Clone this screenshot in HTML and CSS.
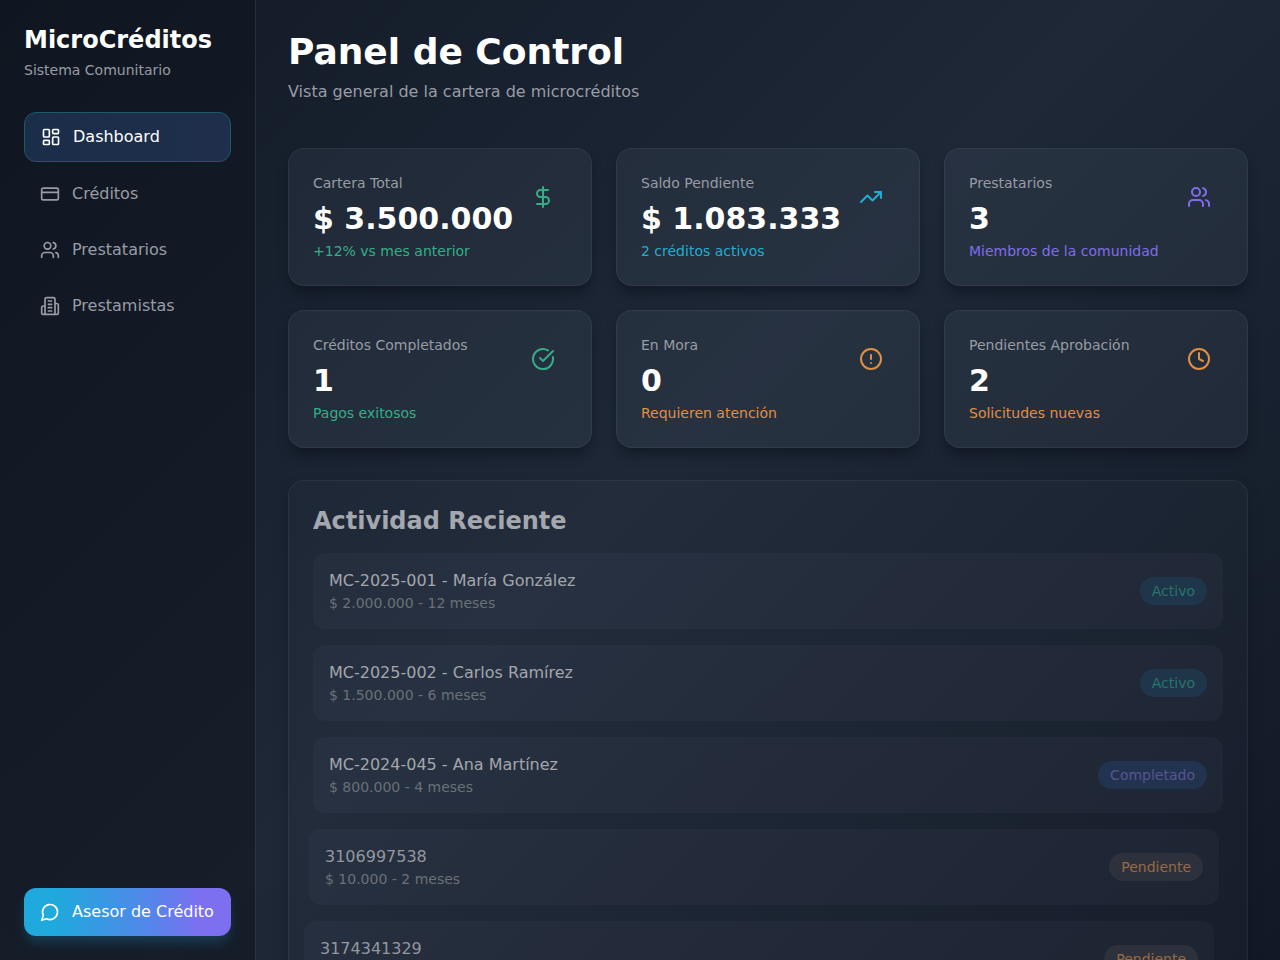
FILE: index.html
```html
<!DOCTYPE html>
<html lang="es">
<head>
<meta charset="utf-8">
<meta name="viewport" content="width=device-width, initial-scale=1">
<title>MicroCréditos</title>
<link rel="stylesheet" href="styles.css">
</head>
<body>
<div class="app">
  <aside class="sidebar">
    <div class="brand">
      <h2 class="brand-name">MicroCréditos</h2>
      <p class="brand-sub">Sistema Comunitario</p>
    </div>
    <nav class="nav">
      <button type="button" class="nav-item active">
        <svg class="icon" viewBox="0 0 24 24"><rect width="7" height="9" x="3" y="3" rx="1"/><rect width="7" height="5" x="14" y="3" rx="1"/><rect width="7" height="9" x="14" y="12" rx="1"/><rect width="7" height="5" x="3" y="16" rx="1"/></svg>
        <span>Dashboard</span>
      </button>
      <button type="button" class="nav-item">
        <svg class="icon" viewBox="0 0 24 24"><rect width="20" height="14" x="2" y="5" rx="2"/><path d="M2 10h20"/></svg>
        <span>Créditos</span>
      </button>
      <button type="button" class="nav-item">
        <svg class="icon" viewBox="0 0 24 24"><path d="M16 21v-2a4 4 0 0 0-4-4H6a4 4 0 0 0-4 4v2"/><circle cx="9" cy="7" r="4"/><path d="M22 21v-2a4 4 0 0 0-3-3.870"/><path d="M16 3.130a4 4 0 0 1 0 7.750"/></svg>
        <span>Prestatarios</span>
      </button>
      <button type="button" class="nav-item">
        <svg class="icon" viewBox="0 0 24 24"><path d="M6 22V4a2 2 0 0 1 2-2h8a2 2 0 0 1 2 2v18Z"/><path d="M6 12H4a2 2 0 0 0-2 2v6a2 2 0 0 0 2 2h2"/><path d="M18 9h2a2 2 0 0 1 2 2v9a2 2 0 0 1-2 2h-2"/><path d="M10 6h4M10 10h4M10 14h4M10 18h4"/></svg>
        <span>Prestamistas</span>
      </button>
    </nav>
    <button type="button" class="advisor">
      <svg class="icon" viewBox="0 0 24 24"><path d="M7.900 20A9 9 0 1 0 4 16.100L2 22Z"/></svg>
      <span>Asesor de Crédito</span>
    </button>
  </aside>

  <main class="main">
    <header class="header">
      <h1 class="title">Panel de Control</h1>
      <p class="subtitle">Vista general de la cartera de microcréditos</p>
    </header>

    <section class="stats">
      <article class="card green">
        <div class="card-text">
          <p class="label">Cartera Total</p>
          <p class="value">$ 3.500.000</p>
          <p class="note">+12% vs mes anterior</p>
        </div>
        <div class="card-icon"><svg class="icon" viewBox="0 0 24 24"><path d="M12 2v20M17 5H9.500a3.500 3.500 0 0 0 0 7h5a3.500 3.500 0 0 1 0 7H6"/></svg></div>
      </article>
      <article class="card cyan">
        <div class="card-text">
          <p class="label">Saldo Pendiente</p>
          <p class="value">$ 1.083.333</p>
          <p class="note">2 créditos activos</p>
        </div>
        <div class="card-icon"><svg class="icon" viewBox="0 0 24 24"><path d="M22 7l-8.500 8.500-5-5L2 17"/><path d="M16 7h6v6"/></svg></div>
      </article>
      <article class="card violet">
        <div class="card-text">
          <p class="label">Prestatarios</p>
          <p class="value">3</p>
          <p class="note">Miembros de la comunidad</p>
        </div>
        <div class="card-icon"><svg class="icon" viewBox="0 0 24 24"><path d="M16 21v-2a4 4 0 0 0-4-4H6a4 4 0 0 0-4 4v2"/><circle cx="9" cy="7" r="4"/><path d="M22 21v-2a4 4 0 0 0-3-3.870"/><path d="M16 3.130a4 4 0 0 1 0 7.750"/></svg></div>
      </article>
      <article class="card green">
        <div class="card-text">
          <p class="label">Créditos Completados</p>
          <p class="value">1</p>
          <p class="note">Pagos exitosos</p>
        </div>
        <div class="card-icon"><svg class="icon" viewBox="0 0 24 24"><path d="M21.801 10A10 10 0 1 1 17 3.335"/><path d="M9 11l3 3L22 4"/></svg></div>
      </article>
      <article class="card orange">
        <div class="card-text">
          <p class="label">En Mora</p>
          <p class="value">0</p>
          <p class="note">Requieren atención</p>
        </div>
        <div class="card-icon"><svg class="icon" viewBox="0 0 24 24"><circle cx="12" cy="12" r="10"/><path d="M12 8v4M12 16h.01"/></svg></div>
      </article>
      <article class="card orange">
        <div class="card-text">
          <p class="label">Pendientes Aprobación</p>
          <p class="value">2</p>
          <p class="note">Solicitudes nuevas</p>
        </div>
        <div class="card-icon"><svg class="icon" viewBox="0 0 24 24"><circle cx="12" cy="12" r="10"/><path d="M12 6v6l4 2"/></svg></div>
      </article>
    </section>

    <section class="activity">
      <h2 class="activity-title">Actividad Reciente</h2>
      <ul class="list">
        <li class="row">
          <div><p class="row-name">MC-2025-001 - María González</p><p class="row-sub">$ 2.000.000 - 12 meses</p></div>
          <span class="badge badge-active">Activo</span>
        </li>
        <li class="row">
          <div><p class="row-name">MC-2025-002 - Carlos Ramírez</p><p class="row-sub">$ 1.500.000 - 6 meses</p></div>
          <span class="badge badge-active">Activo</span>
        </li>
        <li class="row">
          <div><p class="row-name">MC-2024-045 - Ana Martínez</p><p class="row-sub">$ 800.000 - 4 meses</p></div>
          <span class="badge badge-done">Completado</span>
        </li>
        <li class="row entering">
          <div><p class="row-name">3106997538</p><p class="row-sub">$ 10.000 - 2 meses</p></div>
          <span class="badge badge-pending">Pendiente</span>
        </li>
        <li class="row entering-late">
          <div><p class="row-name">3174341329</p><p class="row-sub"></p></div>
          <span class="badge badge-pending">Pendiente</span>
        </li>
      </ul>
    </section>
  </main>
</div>
</body>
</html>
```

FILE: styles.css
```css
* {
  box-sizing: border-box;
  margin: 0;
  padding: 0;
}

body {
  font-family: "DejaVu Sans", sans-serif;
  font-size: 16px;
  line-height: 24px;
  color: #fff;
  background: #111827;
}

button {
  font: inherit;
  border: 0;
  background: none;
  cursor: pointer;
}

.app {
  display: flex;
  height: 100vh;
  overflow: hidden;
  background: linear-gradient(135deg, #121926 0%, #1e2837 50%, #121926 100%);
}

.icon {
  flex: none;
  width: 20px;
  height: 20px;
  fill: none;
  stroke: currentColor;
  stroke-width: 2;
  stroke-linecap: round;
  stroke-linejoin: round;
}

/* Sidebar */
.sidebar {
  flex: none;
  display: flex;
  flex-direction: column;
  width: 256px;
  padding: 24px;
  background: rgba(14, 19, 28, 0.5);
  border-right: 1px solid rgba(255, 255, 255, 0.1);
}

.brand {
  margin-bottom: 32px;
}

.brand-name {
  font-size: 24px;
  line-height: 32px;
  margin-bottom: 4px;
}

.brand-sub {
  font-size: 14px;
  line-height: 20px;
  color: #989ca4;
}

.nav {
  display: flex;
  flex-direction: column;
  gap: 8px;
}

.nav-item,
.advisor {
  display: flex;
  align-items: center;
  gap: 12px;
  padding: 12px 16px;
  border-radius: 12px;
}

.nav-item {
  color: #989ca4;
}

.nav-item.active {
  color: #fff;
  background: linear-gradient(90deg, #1a2d49, #1f2f4b);
  border: 1px solid #1d5a66;
}

.advisor {
  margin-top: auto;
  color: #fff;
  white-space: nowrap;
  background: linear-gradient(90deg, #1fa9dc 15%, #4c8be8 55%, #7c6ff0 85%);
  box-shadow: 0 8px 12px -2px rgba(30, 120, 170, 0.35);
}

/* Main column */
.main {
  flex: 1;
  min-width: 0;
  padding: 32px;
  overflow-y: auto;
  scrollbar-width: none;
}

.header {
  margin-bottom: 44px;
}

.title {
  font-size: 36px;
  line-height: 40px;
  margin-bottom: 8px;
}

.subtitle {
  color: #989ca4;
}

.stats {
  display: grid;
  grid-template-columns: repeat(3, 1fr);
  gap: 24px;
  margin-bottom: 32px;
}

.card {
  display: flex;
  justify-content: space-between;
  align-items: flex-start;
  padding: 24px;
  border: 1px solid rgba(255, 255, 255, 0.06);
  border-radius: 16px;
  background: rgba(220, 230, 255, 0.05);
  box-shadow: 0 8px 12px -2px rgba(8, 12, 24, 0.5);
}

.label {
  font-size: 14px;
  line-height: 20px;
  margin-bottom: 8px;
  color: #989ca4;
}

.value {
  font-size: 30px;
  line-height: 36px;
  font-weight: bold;
  margin-bottom: 4px;
}

.note {
  font-size: 14px;
  line-height: 20px;
}

.card-icon {
  display: flex;
  padding: 12px;
}

.card-icon .icon {
  width: 24px;
  height: 24px;
}

.green .note,
.green .card-icon {
  color: #34ae87;
}

.cyan .note,
.cyan .card-icon {
  color: #20aed0;
}

.violet .note,
.violet .card-icon {
  color: #7f6dea;
}

.orange .note,
.orange .card-icon {
  color: #e08f43;
}

/* Activity */
.activity {
  padding: 24px;
  border: 1px solid rgba(255, 255, 255, 0.06);
  border-radius: 16px;
  background: rgba(210, 225, 255, 0.025);
  box-shadow: 0 8px 16px rgba(8, 12, 24, 0.2);
}

.activity-title {
  font-size: 24px;
  line-height: 32px;
  margin-bottom: 16px;
  color: #a4a7ad;
}

.list {
  display: flex;
  flex-direction: column;
  gap: 16px;
  list-style: none;
}

.row {
  display: flex;
  justify-content: space-between;
  align-items: center;
  padding: 16px;
  border-radius: 12px;
  background: rgba(210, 225, 255, 0.03);
}

.row-name {
  color: #a3a6ac;
}

.row-sub {
  min-height: 20px;
  font-size: 14px;
  line-height: 20px;
  color: #6a7078;
}

/* Rows still sliding in from the left */
.entering {
  transform: translateX(-4px);
}

.entering-late {
  transform: translateX(-9px);
}

.entering .row-name,
.entering-late .row-name {
  color: #93979e;
}

.badge {
  padding: 4px 12px;
  border-radius: 14px;
  font-size: 14px;
  line-height: 20px;
}

.badge-active {
  color: #26756c;
  background: #1f3549;
}

.badge-done {
  color: #5a5492;
  background: #21334f;
}

.badge-pending {
  color: #966a46;
  background: #2d313c;
}
```
